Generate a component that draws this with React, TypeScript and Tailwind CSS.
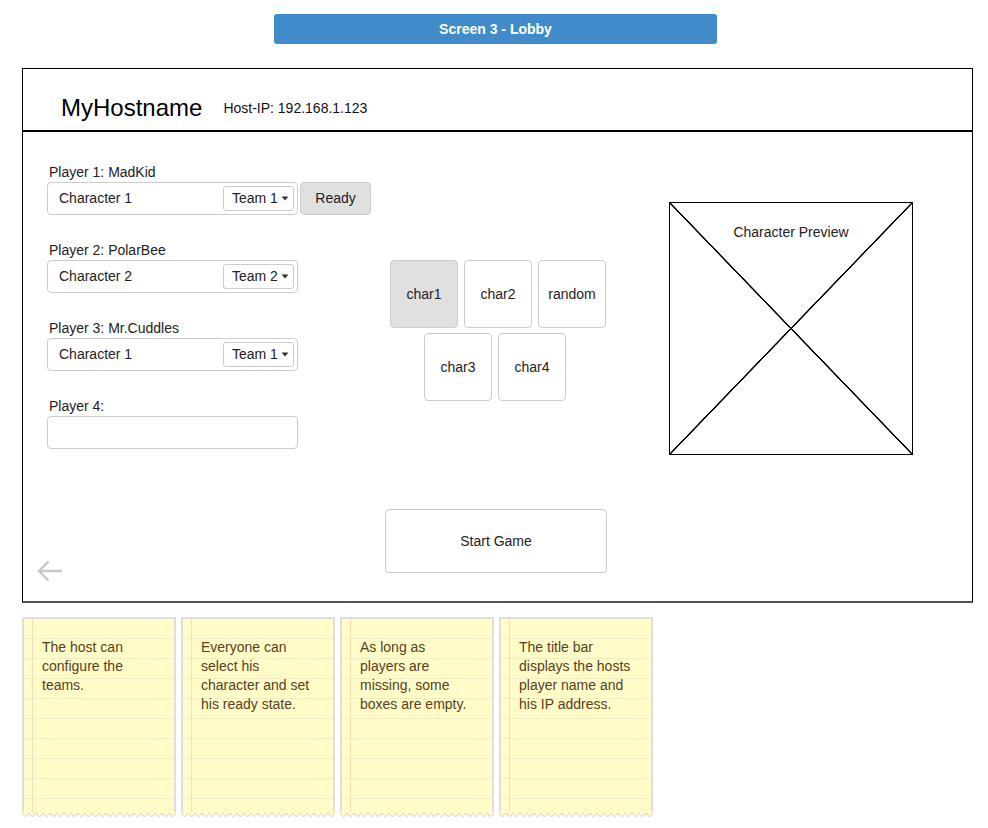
import type { ReactNode } from 'react';

const PLAYERS = [
  { label: 'Player 1: MadKid', character: 'Character 1', team: 'Team 1', ready: true },
  { label: 'Player 2: PolarBee', character: 'Character 2', team: 'Team 2', ready: false },
  { label: 'Player 3: Mr.Cuddles', character: 'Character 1', team: 'Team 1', ready: false },
  { label: 'Player 4:', character: '', team: '', ready: false },
];

const NOTES = [
  'The host can configure the teams.',
  'Everyone can select his character and set his ready state.',
  'As long as players are missing, some boxes are empty.',
  'The title bar displays the hosts player name and his IP address.',
];

function Caret() {
  return (
    <svg width="8" height="5" viewBox="0 0 8 5" className="ml-[3px]">
      <path d="M0.5 0.5 H7.5 L4 4.5 Z" fill="#333" />
    </svg>
  );
}

function PlayerRow({ label, character, team, ready }: (typeof PLAYERS)[number]) {
  return (
    <div className="flex flex-col">
      <div className="text-[14px] leading-[16px] text-[#222] mb-[2px] pl-[2px]">{label}</div>
      <div className="flex items-center gap-[2px]">
        <div className="w-[251px] h-[33px] border border-[#cccccc] rounded-[4px] bg-white flex items-center justify-between pl-[11px] pr-[3px]">
          <span className="text-[14px] text-[#222]">{character}</span>
          {team && (
            <div className="h-[25px] w-[71px] border border-[#cccccc] rounded-[3px] flex items-center pl-[8px] text-[14px] text-[#222]">
              {team}
              <Caret />
            </div>
          )}
        </div>
        {ready && (
          <div className="w-[71px] h-[33px] bg-[#e0e0e0] border border-[#cccccc] rounded-[4px] flex items-center justify-center text-[14px] text-[#222]">
            Ready
          </div>
        )}
      </div>
    </div>
  );
}

function CharButton({ children, active }: { children: ReactNode; active?: boolean }) {
  return (
    <div
      className={`w-[68px] h-[68px] border border-[#cccccc] rounded-[4px] flex items-center justify-center text-[14px] text-[#222] ${
        active ? 'bg-[#e0e0e0]' : 'bg-white'
      }`}
    >
      {children}
    </div>
  );
}

function Zigzag() {
  const teeth = 22;
  const step = 154 / teeth;
  let line = '';
  for (let i = 0; i <= teeth; i++) {
    const x = i * step;
    line += `${x},1 `;
    if (i < teeth) line += `${x + step / 2},5 `;
  }
  const pts = `0,0 ${line}154,0`;
  return (
    <svg width="154" height="7" viewBox="0 0 154 7" className="block">
      <polygon points={pts} fill="#fffcc8" />
      <polyline points={line} fill="none" stroke="#cfcfcf" strokeWidth="1" />
    </svg>
  );
}

function Note({ text }: { text: string }) {
  return (
    <div className="w-[154px] flex flex-col">
      <div className="h-[195px] border-2 border-b-0 border-[#dedede] bg-[#fffcc8] bg-[linear-gradient(to_right,transparent_8px,#f8dcc0_8px,#f8dcc0_9px,transparent_9px),repeating-linear-gradient(to_bottom,transparent_0px,transparent_19px,#f3edc4_19px,#f3edc4_20px)] pl-[18px] pr-[18px] pt-[19px] text-[14px] leading-[19px] text-[#5a3d1e]">
        {text}
      </div>
      <Zigzag />
    </div>
  );
}

export default function App() {
  return (
    <div className="w-[988px] min-h-[828px] bg-white font-['Liberation_Sans',Arial,sans-serif] pt-[14px]">
      <div className="ml-[274px] w-[443px] h-[30px] rounded-[3px] bg-[#428bca] flex items-center justify-center text-white font-bold text-[14px]">
        Screen 3 - Lobby
      </div>

      <div className="ml-[22px] mt-[24px] w-[951px] border border-black border-b-2 border-b-[#555]">
        <div className="h-[63px] flex items-center pt-[17px] pl-[38px] border-b-2 border-black">
          <span className="text-[24px] leading-[24px] text-black">MyHostname</span>
          <span className="ml-[21px] text-[14px] text-[#111]">Host-IP: 192.168.1.123</span>
        </div>

        <div className="h-[469px] flex">
          <div className="w-[348px] pl-[24px] pt-[32px] flex flex-col gap-[27px]">
            {PLAYERS.map((p) => (
              <PlayerRow key={p.label} {...p} />
            ))}
            <svg width="26" height="22" viewBox="0 0 26 22" className="mt-auto mb-[19px] -ml-[10px]">
              <path d="M25 11 H2 M11.5 1.5 L2 11 L11.5 20.5" fill="none" stroke="#c8c8c8" strokeWidth="2.4" />
            </svg>
          </div>

          <div className="ml-[14px] w-[222px] pt-[128px] flex flex-col">
            <div className="flex flex-col gap-[5px] pl-[5px]">
              <div className="flex gap-[6px]">
                <CharButton active>char1</CharButton>
                <CharButton>char2</CharButton>
                <CharButton>random</CharButton>
              </div>
              <div className="flex gap-[6px] pl-[34px]">
                <CharButton>char3</CharButton>
                <CharButton>char4</CharButton>
              </div>
            </div>
            <div className="mt-[108px] w-[222px] h-[64px] border border-[#cccccc] rounded-[4px] flex items-center justify-center text-[14px] text-[#222]">
              Start Game
            </div>
          </div>

          <div className="ml-[62px] pt-[70px]">
            <div className="w-[244px] h-[253px] border-[1.5px] border-black flex justify-center pt-[19px] text-[14px] text-[#222] bg-[linear-gradient(to_top_right,transparent_calc(50%-1px),#000_calc(50%-0.5px),#000_calc(50%+0.5px),transparent_calc(50%+1px)),linear-gradient(to_bottom_right,transparent_calc(50%-1px),#000_calc(50%-0.5px),#000_calc(50%+0.5px),transparent_calc(50%+1px))]">
              <span>Character Preview</span>
            </div>
          </div>
        </div>
      </div>

      <div className="ml-[22px] mt-[14px] flex gap-[5px]">
        {NOTES.map((n) => (
          <Note key={n} text={n} />
        ))}
      </div>
    </div>
  );
}
